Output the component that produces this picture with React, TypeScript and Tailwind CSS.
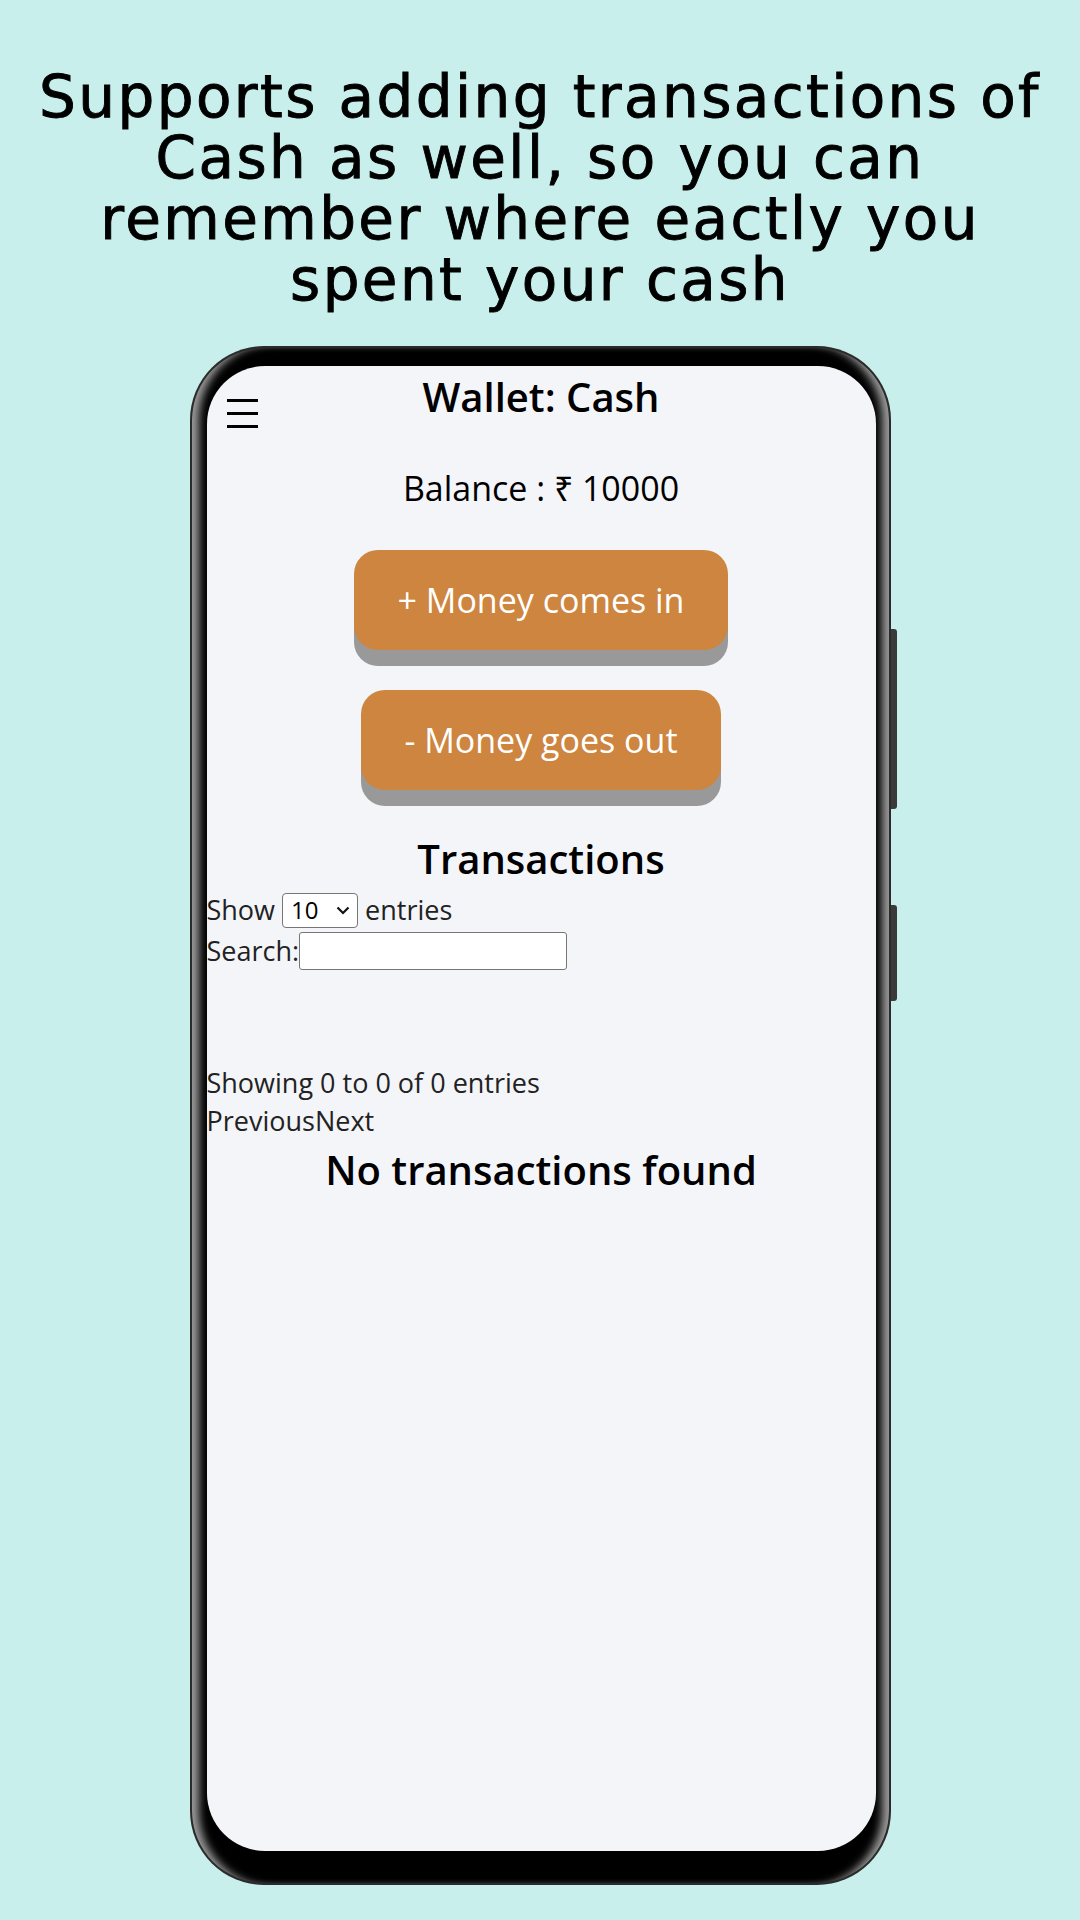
export default function App() {
    return (
        <div className="min-h-[1920px] w-[1080px] bg-[#c8efeb] pt-[67px]">
            <h1 className="text-center font-['DejaVu_Sans',sans-serif] text-[58px] leading-[61px] tracking-[2.4px] text-black [-webkit-text-stroke:0.9px_black]">
                Supports adding transactions of
                <br />
                Cash as well, so you can
                <br />
                remember where eactly you
                <br />
                spent your cash
            </h1>

            <div className="relative mx-auto mt-[35px] h-[1539px] w-[701px] rounded-[74px] bg-[#2b2b2b] p-[2px]">
                {/* side buttons */}
                <div className="absolute right-[-6px] top-[283px] h-[180px] w-[6px] rounded-r-[3px] bg-[#3a3a3a]" />
                <div className="absolute right-[-6px] top-[559px] h-[96px] w-[6px] rounded-r-[3px] bg-[#3a3a3a]" />

                <div className="h-full rounded-[72px] bg-black pb-[32px] pl-[15px] pr-[13px] pt-[18px] shadow-[inset_12px_0_8px_-5px_#9a9a9a,inset_-12px_0_8px_-5px_#9a9a9a]">
                    <div className="h-full overflow-hidden rounded-[58px] bg-[#f4f5f9] font-['Open_Sans',sans-serif] text-black">
                        <header className="grid grid-cols-[1fr_auto_1fr] pt-[4px]">
                            <div className="ml-[20px] mt-[29px] flex w-[31px] flex-col gap-[10px]">
                                <span className="h-[3px] bg-black" />
                                <span className="h-[3px] bg-black" />
                                <span className="h-[3px] bg-black" />
                            </div>
                            <h2 className="text-[40px] leading-[54px] font-semibold">Wallet: Cash</h2>
                            <div />
                        </header>

                        <p className="mt-[37px] text-center text-[34px] leading-[46px]">Balance : ₹ 10000</p>

                        <div className="mt-[39px] flex flex-col items-center gap-[40px]">
                            <button className="rounded-[24px] bg-[#cd853f] px-[44px] py-[27px] text-[34px] leading-[46px] text-white shadow-[0_16px_0_#999999]">
                                + Money comes in
                            </button>
                            <button className="rounded-[24px] bg-[#cd853f] px-[43px] py-[27px] text-[34px] leading-[46px] text-white shadow-[0_16px_0_#999999]">
                                - Money goes out
                            </button>
                        </div>

                        <h2 className="mt-[42px] text-center text-[40px] leading-[54px] font-semibold">Transactions</h2>

                        <div className="text-[27px] leading-[38px] text-[#222]">
                            <div className="mt-[5px] flex items-center">
                                <span>Show</span>
                                <div className="mx-[7px] flex h-[35px] w-[76px] items-center justify-between rounded-[4px] border border-[#767676] bg-white pl-[8px] pr-[7px] text-[24px] leading-none text-black">
                                    <span>10</span>
                                    <svg width="14" height="9" viewBox="0 0 14 9" fill="none">
                                        <path d="M1.5 1.5 L7 7 L12.5 1.5" stroke="#111" strokeWidth="2.2" />
                                    </svg>
                                </div>
                                <span>entries</span>
                            </div>
                            <div className="mt-[3px] flex items-center">
                                <span>Search:</span>
                                <input className="h-[38px] w-[268px] rounded-[3px] border border-[#767676] bg-white" />
                            </div>

                            <p className="mt-[94px]">Showing 0 to 0 of 0 entries</p>
                            <p>
                                <span>Previous</span>
                                <span>Next</span>
                            </p>
                        </div>

                        <p className="mt-[3px] text-center text-[40px] leading-[54px] font-semibold">No transactions found</p>
                    </div>
                </div>
            </div>
        </div>
    );
}
